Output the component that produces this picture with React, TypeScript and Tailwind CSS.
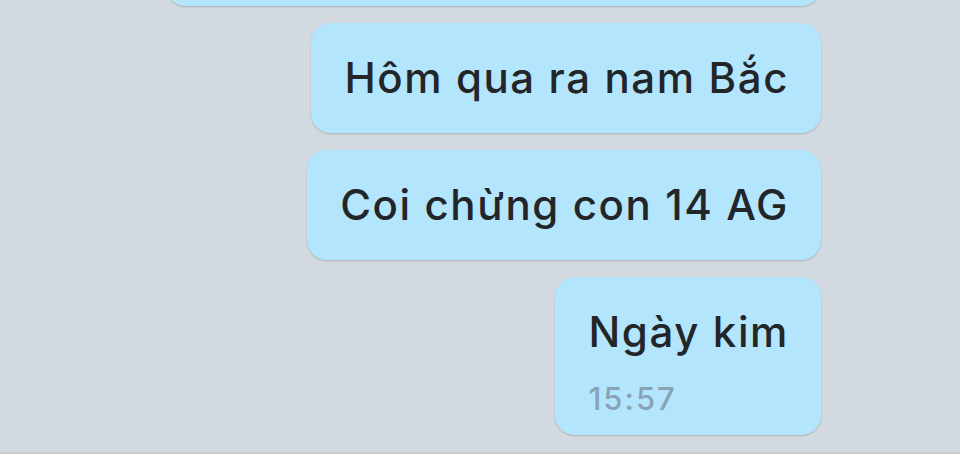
import React from "react";

const messages = [
  { id: 1, text: "Hôm qua ra nam Bắc" },
  { id: 2, text: "Coi chừng con 14 AG" },
];

function Bubble({ text, time }: { text: string; time?: string }) {
  return (
    <div className="bg-[#b3e5fc] rounded-[20px] shadow-[0_1px_2px_rgba(0,0,0,0.18)] pl-[33px] pr-[32px] pt-[30px] pb-[30px]">
      <p className="text-[42px] leading-[50px] font-medium tracking-[1.6px] text-[#232629]">{text}</p>
      {time && (
        <p className="text-[31px] leading-[36px] font-medium tracking-[2px] text-[#8aa3b4] mt-[24px] -mb-[12px]">
          {time}
        </p>
      )}
    </div>
  );
}

export default function App() {
  return (
    <div
      className="h-[470px] w-[960px] overflow-hidden flex flex-col bg-[#d3d9e0]"
      style={{ fontFamily: "Inter, Roboto, 'Noto Sans', sans-serif" }}
    >
      <div className="flex-1 flex flex-col items-end gap-[17px] pr-[139px] -mt-[104px]">
        <div className="w-[655px] h-[110px] bg-[#b3e5fc] rounded-[20px] shadow-[0_1px_2px_rgba(0,0,0,0.18)]" />
        {messages.map((m) => (
          <Bubble key={m.id} text={m.text} />
        ))}
        <Bubble text="Ngày kim" time="15:57" />
      </div>
      <div className="h-[18px] bg-white border-t-2 border-[#c9ced4]" />
    </div>
  );
}
